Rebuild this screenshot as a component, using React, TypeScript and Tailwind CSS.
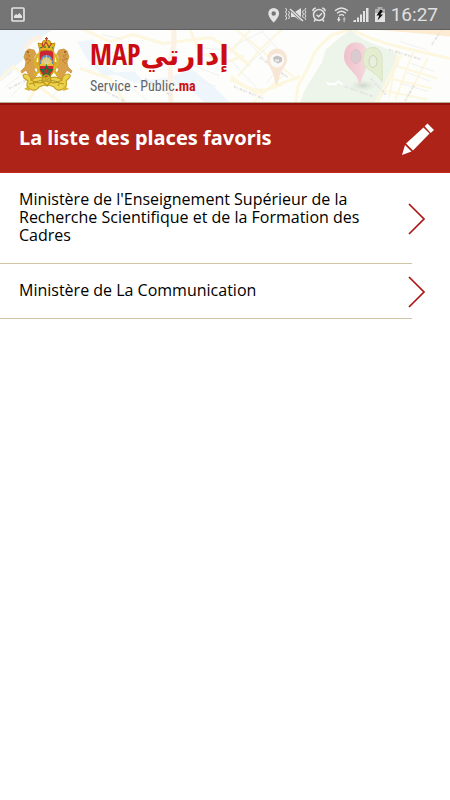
const places = [
  "Ministère de l'Enseignement Supérieur de la Recherche Scientifique et de la Formation des Cadres",
  "Ministère de La Communication",
];

function StatusBar() {
  return (
    <div className="flex h-[30px] items-center justify-between border-b border-[#5f5f5f] bg-[#757575] pr-3 pl-[11px] text-[#e3e3e3]">
      <svg className="h-[15px] w-[14px]" viewBox="0 0 14 15" fill="none">
        <rect x="1" y="1" width="12" height="13" rx="1" stroke="currentColor" strokeWidth="1.7" />
        <path d="M3 11V9l2-2 1.5 1L8.500 6 11 9v2z" fill="currentColor" />
      </svg>
      <div className="flex items-center">
        <svg className="h-[30px] w-[124px]" viewBox="267 0 124 30" fill="none">
          {/* Location */}
          <path
            fillRule="evenodd"
            fill="currentColor"
            d="M273.700 8a5.400 5.400 0 0 0-5.400 5.400c0 4 5.400 9 5.400 9s5.400-5 5.400-9a5.400 5.400 0 0 0-5.400-5.400zm0 3.300a2.200 2.200 0 1 1 0 4.400 2.200 2.200 0 0 1 0-4.400z"
          />
          {/* Muted, vibrating */}
          <path d="M291 12h4l6-4v13l-6-4h-4z" fill="currentColor" />
          <path d="M290 9l13 12" stroke="#757575" strokeWidth="3" />
          <path d="M290 9l13 12" stroke="currentColor" strokeWidth="1.400" />
          <path
            d="M285.500 8l1.300 2-1.300 2 1.300 2-1.300 2 1.300 2-1.300 2M288.500 11l1 2-1 2 1 2-1 2M306 8l-1.300 2 1.300 2-1.300 2 1.300 2-1.300 2 1.300 2M303.500 10l-1 2 1 2-1 2 1 2"
            stroke="currentColor"
            strokeWidth="1"
          />
          {/* Alarm */}
          <circle cx="319" cy="15" r="5.500" stroke="currentColor" strokeWidth="1.500" />
          <path
            d="M312.800 11.300q.2-3 3-3.300M325.200 11.300q-.2-3-3-3.300M315.500 19.500l-1.500 2M322.500 19.500l1.500 2M316.500 14.800l2 2 3.500-3.600"
            stroke="currentColor"
            strokeWidth="1.400"
          />
          {/* Wifi */}
          <path
            d="M335 10.800q6.500-5.600 13 0M337 13.200q4.500-3.800 9 0M339 15.600q2.500-2 5 0"
            stroke="currentColor"
            strokeWidth="1.400"
          />
          <path d="M337 19h1v-2h1.500v2h1l-1.700 3z" fill="currentColor" />
          <path d="M342.500 19.500h1V22h1.500v-2.500h1l-1.700-3z" fill="#b5b5b5" />
          {/* Signal */}
          <path
            d="M354 20h2v2h-3zM357 17.500h2V22h-2zM360 14.500h2V22h-2zM363 11h2v11h-2zM366 8h2.500v14H366z"
            fill="currentColor"
          />
          {/* Battery */}
          <path d="M375 9h2.500V7h5v2h2.500v4h-10z" fill="#b0b0b0" />
          <path d="M375 13h10v9h-10z" fill="currentColor" />
          <path d="M380.500 9.500l-4 6h2.700l-1.700 5 5.500-6h-2.600l2.400-3.500z" fill="#111" />
        </svg>
        <time className="font-[Roboto,sans-serif] text-[19px] leading-[24px] text-[#e0e0e0]">
          16:27
        </time>
      </div>
    </div>
  );
}

function MapBackdrop() {
  return (
    <svg
      className="absolute inset-0 h-full w-full"
      viewBox="0 0 450 73"
      preserveAspectRatio="xMidYMid slice"
      fill="none"
      aria-hidden="true"
    >
      <defs>
        <linearGradient id="pink" x1="0" x2="1">
          <stop stopColor="#efc0cb" />
          <stop offset="1" stopColor="#f4dade" />
        </linearGradient>
        <radialGradient id="shade">
          <stop stopColor="#b9c2b7" stopOpacity="0.600" />
          <stop offset="1" stopColor="#d9e2d7" stopOpacity="0" />
        </radialGradient>
      </defs>
      <path d="M0 0h450v73H0z" fill="#fdfdfc" />
      {/* Water */}
      <path d="M0 0h53L44 6 36 10 24 19l3 8-12 10-4 7-11 8z" fill="#eaf3fa" />
      <path d="M77 12l17-2 5 20 16 13 19-1 9 9 25-3 24-8 18 14 20 19h-26l-17-17-22 1-31-4-18-8-12 2-16-16z" fill="#eef6fc" />
      {/* Park */}
      <path d="M351 0q8 10 30 17l17 7 1 10-6 11-8 17-7 11h-78l5-13 17-27 4-13 14-12z" fill="#edf4ea" />
      {/* Roads */}
      <g stroke="#fcf7de" strokeWidth="3">
        <path d="M0 50l13-13 24 19 24 17M37 56l-9 17M83 0l27 12 23-7 30 9 48-6 20 12 19 16" />
        <path d="M80 39l30 10 15 24M190 0l10 24 29 8 15-6" />
        <path d="M230 23l20-22M236 0l57 47M238 47l22-27 22-20M230 50l27 14 26-9M253 73l30-27" strokeWidth="2" />
        <path d="M231 47q25 22 45 9l24-9" />
        <path d="M350 0l-17 5q-19 14-22 27l-13 25-2 16M353 1q25 12 49 17l48 11M401 25l-25 48" />
        <path d="M398 20l-9 48M413 23l-18 48M428 28l-23 45M398 37l39 12M390 49l42 10M384 61l43 9" strokeWidth="2" />
      </g>
      <path d="M174 0v16l-4 15 1 42" stroke="#fbf1e4" strokeWidth="5" />
      <path d="M359 0h91v7l-28-3-50-4z" fill="#fdebd2" />
      <path d="M25 20q7-14 17-11" stroke="#fbf1e4" strokeWidth="5" />
      {/* Minor streets */}
      <g stroke="#f1f1f0" strokeWidth="1">
        <path d="M5 58l28-22M10 68l30-31M51 68l15-16M102 5l21 5M106 25l27-8M124 52l23 19M187 34l32 12M197 18l23 2M198 51l18 6" />
        <path d="M231 31l26 28M246 10l28 30M262 2l26 29M234 16l30-15M243 40l28-26M266 54l20-24M400 12l28 9M411 34l23 8M407 43l24 9M401 54l27 8" />
      </g>
      {/* Street labels */}
      <g stroke="#e3e3e2" strokeWidth="2" strokeDasharray="2 1 1 2 3 1">
        <path d="M9 59l18-9M98 58l27 14M145 49l26 17M234 57l29 12M260 28l28 20M345 57l28 10M371 49l15 16M389 20l32 10M414 56l-9 15M432 15l9-14" />
      </g>
      {/* Orange marker */}
      <path d="M277 19a10 10 0 0 0-10 10c0 7 7 12 8 24l2 3 3-11c3-7 7-9 7-16a10 10 0 0 0-10-10z" fill="#f8e6d5" />
      <circle cx="277" cy="31" r="7" fill="#f9f9f8" />
      <path d="M273 28l4-2 5 2v4l-4 2-4-2z" fill="#c4c2c0" />
      <path d="M275 30h4v2h-4z" fill="#eee" />
      {/* Pink marker */}
      <ellipse cx="363" cy="56" rx="14" ry="6" fill="url(#shade)" />
      <path d="M356 13c-8 0-12 6-12 14 0 12 13 14 16 29 4-15 8-17 8-29 0-8-4-14-12-14z" fill="url(#pink)" />
      <ellipse cx="356" cy="27" rx="5" ry="7" fill="#d9cbd0" stroke="#e7bec9" />
      {/* Green marker */}
      <path d="M373 18c-7 0-10 5-10 12 0 10 12 11 19 22 1-9 0-15 0-22 0-7-3-12-9-12z" fill="#e4edcf" stroke="#d9e4c4" />
      <ellipse cx="373" cy="32" rx="4" ry="6" fill="#e8efe0" stroke="#c9d8ad" />
      <path d="M327 53l2 2 4-1 2 1 3-3 5 3" stroke="#fff" strokeWidth="2" />
    </svg>
  );
}

function Emblem() {
  return (
    <svg className="h-[58px] w-[54px] shrink-0" viewBox="21 37 54 58" fill="none" role="img" aria-label="Royaume du Maroc">
      {/* Lions */}
      <g fill="#d9a04a" stroke="#c58a38" strokeWidth="0.700">
        <path d="M27 51l3-2 5 1 2 4-2 3 1 6 5-1-3 5-3 2 3 6-4 4-6 1-1-2 3-3-3-5-4 3-1-2 4-4 1-5-2-5z" />
        <path d="M68 51l-3-2-5 1-2 4 2 3-1 6-5-1 3 5 3 2-3 6 4 4 6 1 1-2-3-3 3-5 4 3 1-2-4-4-1-5 2-5z" />
      </g>
      <path d="M27 54l4 2-4 3 5 1-4 4M68 54l-4 2 4 3-5 1 4 4" stroke="#b87a30" strokeWidth="0.800" />
      <path d="M28 52h2M65 52h2" stroke="#5d3512" />
      {/* Shield */}
      <path d="M40 54q0-5 7-5 8 0 8 5v16q-2 6-8 8-5-2-7-8z" fill="#ce2536" stroke="#dba613" strokeWidth="1.600" />
      <path d="M41 64q0-9 6.500-9t6.500 9z" fill="#5994ba" />
      <path d="M42 64l1-4 2-2 2.500-1 2.500 1 2 2 1 4z" fill="#f0c644" />
      <path d="M47.500 55v9M44 57l3 7M51 57l-3 7M41.500 61l6 3 6-3" stroke="#cadbe1" strokeWidth="0.600" />
      <path d="M41 64h13v2H41z" fill="#e3bf3d" />
      <path d="M47.500 66l1.400 3.700h4l-3.100 2.400 1.100 4-3.400-2.200-3.400 2.200 1.100-4-3.100-2.400h4z" stroke="#127b39" strokeWidth="1.400" />
      {/* Crown */}
      <path d="M40 47l-1-4 4 1 1-3 4-1 3 1 1 3 4-1-1 4-1 4q-7-2-13 0z" fill="#e5b823" stroke="#bd8d14" />
      <path d="M43 43l1 4 3-5 3 5 3-4" stroke="#b73b2c" strokeWidth="1.200" />
      <path d="M41 48q6-2 13 0" stroke="#328044" strokeWidth="1.300" strokeDasharray="2 2" />
      <circle cx="47.500" cy="40" r="1.500" fill="#dbad2d" />
      <path d="M47.500 37v4M46 38.500h3" stroke="#b64d25" />
      {/* Acanthus scrolls and ribbon */}
      <path d="M39 54q-5 8-1 13t-3 8M56 54q5 8 1 13t3 8" stroke="#d8b323" strokeWidth="2.500" />
      <path d="M25 78q-2-3 1-4 5 0 6 6 7-5 16-1 9-4 15 1 1-6 6-6 4 1 1 4l-3 3q2 5-3 8-6 3-9-2-7-4-15 0-3 5-9 2-5-3-2-8z" fill="#ead34d" stroke="#cba022" strokeWidth="1.200" />
      <path d="M32 80q7 5 15 1 9 4 16-1M30 84q5-2 6 2M65 84q-5-2-6 2" stroke="#c69b1c" strokeWidth="1.200" />
      <path d="M34 83q13-6 27 0" stroke="#655e27" strokeDasharray="1 1" />
      <path d="M44 77q3-4 7 0l1 4-4 5-5-5z" stroke="#c29c1a" strokeWidth="1.500" />
      <path d="M25 89l5-3 1 5zM70 89l-5-3-1 5z" fill="#d9b42e" />
    </svg>
  );
}

export default function App() {
  return (
    <div className="min-h-screen bg-white font-['Open_Sans','Noto_Sans',sans-serif] text-black">
      <StatusBar />
      <header className="relative h-[73px] overflow-hidden border-b border-[#b9ad91]">
        <MapBackdrop />
        <div className="relative flex h-full items-center gap-4 pl-5">
          <Emblem />
          <div className="flex flex-col pb-1">
            <div className="flex h-[44px] items-baseline text-[#cc0b12]">
              <span className="font-['Open_Sans_Condensed','Liberation_Sans_Narrow',sans-serif] text-[28px] leading-[44px]">
                MAP
              </span>
              <span lang="ar" dir="rtl" className="font-['DejaVu_Sans',sans-serif] text-[28px] leading-[44px] font-bold">
                إدارتي
              </span>
            </div>
            <p className="font-['Roboto_Condensed','Liberation_Sans_Narrow',sans-serif] text-[14px] leading-[20px] text-[#626468]">
              Service - Public<b className="text-[#c6131a]">.ma</b>
            </p>
          </div>
        </div>
      </header>

      <main>
        <div className="flex h-[70px] items-center justify-between border-t-2 border-b border-t-[#94100c] border-b-[#c5291f] bg-[#ad2318] pr-4 pl-[19px] text-white">
          <h1 className="pb-[2px] font-['Noto_Sans',sans-serif] text-[20px] leading-[28px] font-bold">
            La liste des places favoris
          </h1>
          <button type="button" aria-label="Modifier">
            <svg className="h-8 w-8" viewBox="0 0 32 32" fill="currentColor">
              <path d="M4 20.500L21.500 4.500l6 6L11 27.500zM22.700 3.300L25.500.5l6.500 6.500-3.300 3zM3 22l6.500 6.500L0 32z" />
            </svg>
          </button>
        </div>

        <ul>
          {places.map((place) => (
            <li key={place}>
              <a href="#" className="flex">
                <span className="mr-[38px] grid flex-1 border-b border-[#d1c4a4] pt-[17px] pb-[19px] pl-[19px]">
                  <span className="mr-10 text-[16px] leading-[18px]">{place}</span>
                </span>
                <span className="-ml-[42px] flex w-[42px] items-center">
                  <svg className="h-8 w-[18px]" viewBox="0 0 18 32" fill="none" stroke="#ad1714" strokeWidth="1.700">
                    <path d="M1 1l15 15L1 31" />
                  </svg>
                </span>
              </a>
            </li>
          ))}
        </ul>
      </main>
    </div>
  );
}
